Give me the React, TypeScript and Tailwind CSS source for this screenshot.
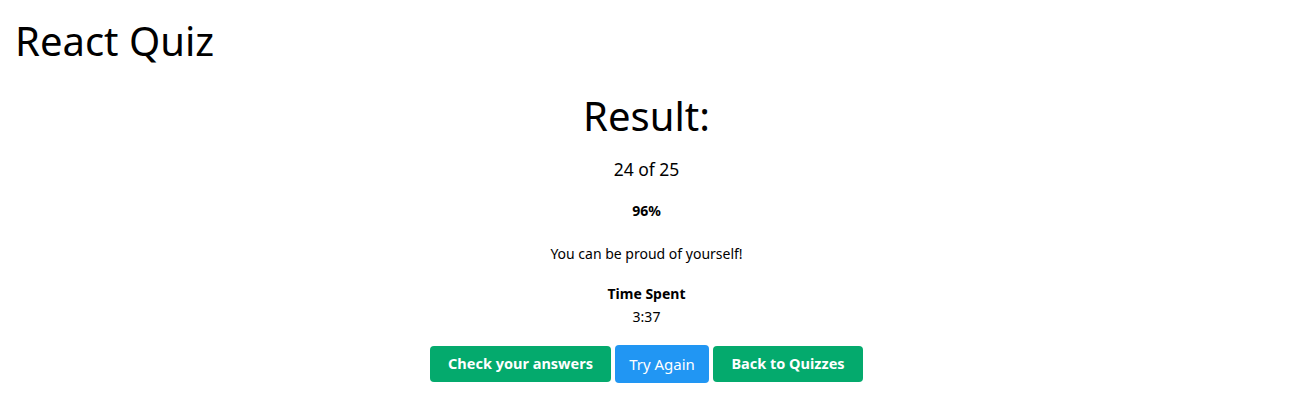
import React from "react";

export default function App() {
  return (
    <div className="min-h-[418px] bg-white text-black">
      <div className="font-['Noto_Sans',sans-serif]">
        <h1 className="px-[15px] pt-[17px] text-[40px] leading-[1.2] font-normal">React Quiz</h1>
        <div className="flex flex-col items-center pr-[14px]">
          <h2 className="mt-[27px] text-[40px] leading-[1.2]">Result:</h2>
          <p className="mt-[16px] text-[17.5px] leading-[1.5]">24 of 25</p>
          <p className="mt-[18px] text-[14px] leading-[1.5] font-bold">96%</p>
          <p className="mt-[22px] text-[14px] leading-[1.5]">You can be proud of yourself!</p>
          <p className="mt-[19px] text-[14px] leading-[1.5] font-bold">Time Spent</p>
          <p className="mt-[2px] text-[14px] leading-[1.5]">3:37</p>
          <div className="mt-[18px] flex items-center gap-[4px]">
            <button className="h-[36px] w-[181px] rounded-[4px] bg-[#04aa6d] text-[14.5px] font-bold text-white">Check your answers</button>
            <button className="h-[38px] w-[94px] rounded-[4px] bg-[#2196f3] text-[15px] text-white">Try Again</button>
            <button className="h-[36px] w-[150px] rounded-[4px] bg-[#04aa6d] text-[14.5px] font-bold text-white">Back to Quizzes</button>
          </div>
        </div>
      </div>
    </div>
  );
}
